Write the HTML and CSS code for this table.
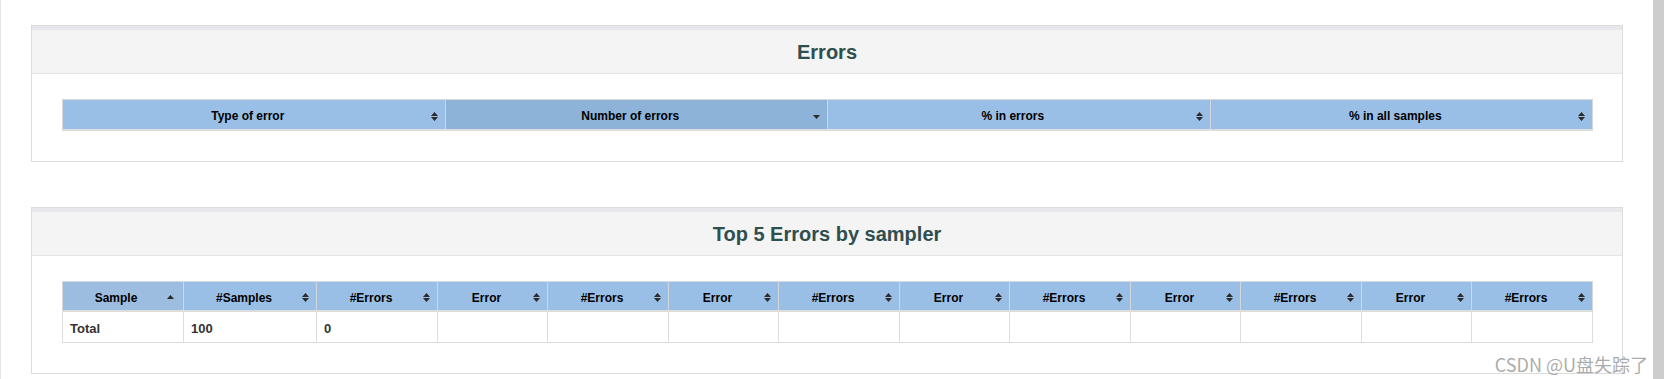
FILE: index.html
```html
<!DOCTYPE html>
<html>
<head>
<meta charset="utf-8">
<link rel="stylesheet" href="styles.css">
</head>
<body>
<div class="page">
  <div class="edge"></div>
  <main class="content">
    <section class="panel">
      <div class="panel-heading"><h2 class="panel-title">Errors</h2></div>
      <div class="panel-body">
        <table class="grid grid-fixed">
          <thead>
            <tr>
              <th><div class="th-in"><span class="th-text">Type of error</span><svg class="sort" viewBox="0 0 7 9"><path d="M0 4L3.5 0L7 4Z M0 5L3.5 9L7 5Z"/></svg></div></th>
              <th class="sorted"><div class="th-in"><span class="th-text">Number of errors</span><svg class="sort" viewBox="0 0 7 9"><path d="M0 3L3.5 7L7 3Z"/></svg></div></th>
              <th><div class="th-in"><span class="th-text">% in errors</span><svg class="sort" viewBox="0 0 7 9"><path d="M0 4L3.5 0L7 4Z M0 5L3.5 9L7 5Z"/></svg></div></th>
              <th><div class="th-in"><span class="th-text">% in all samples</span><svg class="sort" viewBox="0 0 7 9"><path d="M0 4L3.5 0L7 4Z M0 5L3.5 9L7 5Z"/></svg></div></th>
            </tr>
          </thead>
        </table>
      </div>
    </section>

    <section class="panel panel-second">
      <div class="panel-heading"><h2 class="panel-title">Top 5 Errors by sampler</h2></div>
      <div class="panel-body">
        <table class="grid grid-fixed">
          <colgroup>
            <col class="c-sample"><col class="c-samples"><col class="c-errs"><col class="c-err"><col class="c-errs"><col class="c-err"><col class="c-errs"><col class="c-err"><col class="c-errs"><col class="c-err"><col class="c-errs"><col class="c-err"><col class="c-errs">
          </colgroup>
          <thead>
            <tr>
              <th class="sorted-asc"><div class="th-in"><span class="th-text">Sample</span><svg class="sort sort-wide" viewBox="0 0 7 9"><path d="M0 6L3.5 2L7 6Z"/></svg></div></th>
              <th><div class="th-in"><span class="th-text">#Samples</span><svg class="sort" viewBox="0 0 7 9"><path d="M0 4L3.5 0L7 4Z M0 5L3.5 9L7 5Z"/></svg></div></th>
              <th><div class="th-in"><span class="th-text">#Errors</span><svg class="sort" viewBox="0 0 7 9"><path d="M0 4L3.5 0L7 4Z M0 5L3.5 9L7 5Z"/></svg></div></th>
              <th><div class="th-in"><span class="th-text">Error</span><svg class="sort" viewBox="0 0 7 9"><path d="M0 4L3.5 0L7 4Z M0 5L3.5 9L7 5Z"/></svg></div></th>
              <th><div class="th-in"><span class="th-text">#Errors</span><svg class="sort" viewBox="0 0 7 9"><path d="M0 4L3.5 0L7 4Z M0 5L3.5 9L7 5Z"/></svg></div></th>
              <th><div class="th-in"><span class="th-text">Error</span><svg class="sort" viewBox="0 0 7 9"><path d="M0 4L3.5 0L7 4Z M0 5L3.5 9L7 5Z"/></svg></div></th>
              <th><div class="th-in"><span class="th-text">#Errors</span><svg class="sort" viewBox="0 0 7 9"><path d="M0 4L3.5 0L7 4Z M0 5L3.5 9L7 5Z"/></svg></div></th>
              <th><div class="th-in"><span class="th-text">Error</span><svg class="sort" viewBox="0 0 7 9"><path d="M0 4L3.5 0L7 4Z M0 5L3.5 9L7 5Z"/></svg></div></th>
              <th><div class="th-in"><span class="th-text">#Errors</span><svg class="sort" viewBox="0 0 7 9"><path d="M0 4L3.5 0L7 4Z M0 5L3.5 9L7 5Z"/></svg></div></th>
              <th><div class="th-in"><span class="th-text">Error</span><svg class="sort" viewBox="0 0 7 9"><path d="M0 4L3.5 0L7 4Z M0 5L3.5 9L7 5Z"/></svg></div></th>
              <th><div class="th-in"><span class="th-text">#Errors</span><svg class="sort" viewBox="0 0 7 9"><path d="M0 4L3.5 0L7 4Z M0 5L3.5 9L7 5Z"/></svg></div></th>
              <th><div class="th-in"><span class="th-text">Error</span><svg class="sort" viewBox="0 0 7 9"><path d="M0 4L3.5 0L7 4Z M0 5L3.5 9L7 5Z"/></svg></div></th>
              <th><div class="th-in"><span class="th-text">#Errors</span><svg class="sort" viewBox="0 0 7 9"><path d="M0 4L3.5 0L7 4Z M0 5L3.5 9L7 5Z"/></svg></div></th>
            </tr>
          </thead>
          <tbody>
            <tr>
              <td>Total</td><td>100</td><td>0</td><td></td><td></td><td></td><td></td><td></td><td></td><td></td><td></td><td></td><td></td>
            </tr>
          </tbody>
        </table>
      </div>
    </section>
  </main>
  <div class="scrollbar"></div>
  <div class="watermark">CSDN @U盘失踪了</div>
</div>
</body>
</html>
```

FILE: styles.css
```css
* { box-sizing: border-box; }

html, body {
  margin: 0;
  padding: 0;
  background: #ffffff;
}

body {
  font-family: "Liberation Sans", Arial, sans-serif;
  color: #333333;
  overflow: hidden;
}

.page {
  position: relative;
  display: flex;
  width: 1664px;
  height: 379px;
}

.edge {
  width: 1px;
  background: #e4e4e4;
  flex: none;
}

.content {
  flex: 1;
  padding: 25px 30px 0 30px;
}

.scrollbar {
  width: 11px;
  flex: none;
  background: #cdcdcd;
}

.panel {
  border: 1px solid #dcdcdc;
  background: #ffffff;
}

.panel-second {
  margin-top: 45px;
}

.panel-heading {
  border-top: 4px solid #e6e8eb;
  background: #f4f4f4;
  border-bottom: 1px solid #e4e4e4;
  height: 48px;
  overflow: hidden;
}

.panel-title {
  margin: 0;
  padding-top: 2px;
  text-align: center;
  font-size: 20px;
  font-weight: bold;
  line-height: 41px;
  color: #2f4f4f;
}

.panel-body {
  padding: 25px 29px 30px 30px;
}

.grid {
  width: 100%;
  border-collapse: collapse;
}

.grid-fixed {
  table-layout: fixed;
}

.c-sample { width: 121px; }
.c-samples { width: 133px; }
.c-errs { width: 121px; }
.c-err { width: 110px; }

.grid th {
  background: #99bfe6;
  border: 1px solid #d3d8dd;
  border-bottom: 2px solid #dddddd;
  padding: 0 7px 0 8px;
  height: 30px;
  font-size: 12px;
  font-weight: bold;
  color: #000000;
}

.grid th.sorted {
  background: #8eb3d9;
}

.grid th.sorted-asc {
  background: #9cbddf;
}

.th-in {
  display: flex;
  align-items: center;
  height: 28px;
  padding-top: 4px;
}

.th-text {
  flex: 1;
  text-align: center;
  white-space: nowrap;
  padding-right: 6px;
}

.sort {
  width: 7px;
  height: 9px;
  flex: none;
  fill: #2b2b2b;
}

.sort-wide {
  margin-right: 2px;
}

.grid td {
  border: 1px solid #dddddd;
  height: 31px;
  padding: 4px 7px 0 7px;
  font-size: 13px;
  font-weight: bold;
  color: #333333;
}

.watermark {
  position: absolute;
  right: 16px;
  bottom: 4px;
  font-family: "Noto Sans CJK SC", "Liberation Sans", sans-serif;
  font-size: 18px;
  line-height: 22px;
  color: rgba(150, 150, 150, 0.8);
  white-space: nowrap;
}
```
